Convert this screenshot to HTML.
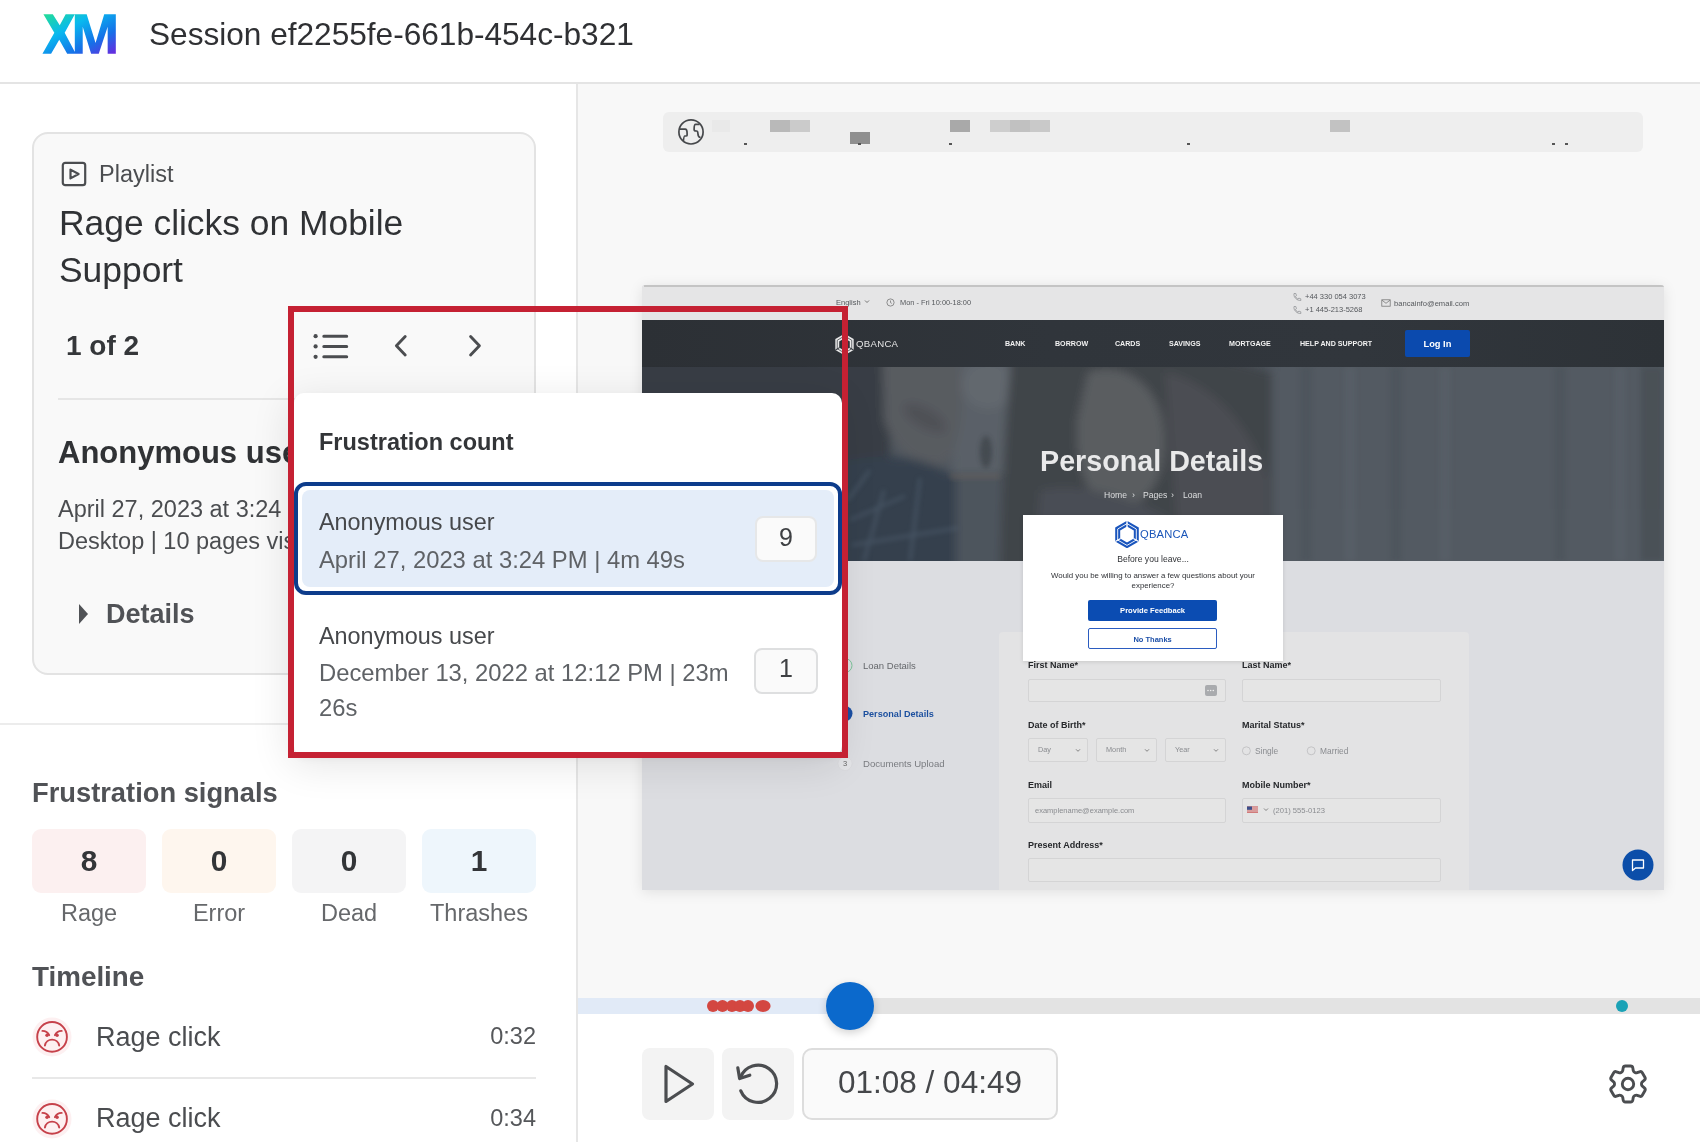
<!DOCTYPE html>
<html><head><meta charset="utf-8">
<style>
*{margin:0;padding:0;box-sizing:border-box}
html,body{width:1700px;height:1142px;overflow:hidden;background:#fff}
body{position:relative;font-family:"Liberation Sans",sans-serif;color:#333}
.a{position:absolute}
.t{position:absolute;white-space:nowrap;line-height:1;will-change:transform}
</style></head><body>

<!-- HEADER -->
<svg class="a" style="left:38px;top:10px" width="84" height="50" viewBox="0 0 1700 1012">
<defs><linearGradient id="xmg" x1="0" y1="0" x2="1" y2="1">
<stop offset="0" stop-color="#25de93"/><stop offset="0.35" stop-color="#09b9ef"/><stop offset="0.7" stop-color="#1670e8"/><stop offset="1" stop-color="#6a28df"/></linearGradient></defs>
<path fill="url(#xmg)" d="M110 85 L300 85 L440 310 L560 85 L745 85 L540 460 L765 885 L590 885 L430 600 L265 885 L90 885 L330 460 Z M745 85 L985 85 L1165 670 L1340 85 L1575 85 L1575 885 L1410 885 L1410 340 L1230 885 L1075 885 L905 340 L905 885 L745 885 Z"/>
</svg>
<div class="t" style="left:149px;top:18.7px;font-size:31.6px;color:#2f3033">Session ef2255fe-661b-454c-b321</div>
<div class="a" style="left:0;top:82px;width:1700px;height:2px;background:#e4e4e4"></div>

<!-- LEFT PANEL -->
<div class="a" style="left:32px;top:132px;width:504px;height:543px;border:2px solid #e3e3e3;border-radius:16px;background:#f9f9f9"></div>
<svg class="a" style="left:61px;top:161px" width="26" height="26" viewBox="0 0 26 26"><rect x="1.8" y="1.8" width="22.4" height="22.4" rx="2.5" fill="none" stroke="#4b4d50" stroke-width="2.2"/><path d="M9.5 8.6 L17.6 13 L9.5 17.4 Z" fill="none" stroke="#4b4d50" stroke-width="2.2" stroke-linejoin="round"/></svg>
<div class="t" style="left:99px;top:162.6px;font-size:23.5px;color:#4b4d50">Playlist</div>
<div class="t" style="left:59px;top:206.2px;font-size:35.4px;color:#303235">Rage clicks on Mobile</div>
<div class="t" style="left:59px;top:253.3px;font-size:35.4px;color:#303235">Support</div>
<div class="t" style="left:66px;top:332px;font-size:28px;font-weight:700;color:#35373a">1 of 2</div>
<div class="a" style="left:58px;top:398px;width:452px;height:2px;background:#e6e6e6"></div>
<div class="t" style="left:58px;top:437.3px;font-size:31px;font-weight:700;color:#303235">Anonymous user</div>
<div class="t" style="left:58px;top:498.1px;font-size:23.5px;color:#4b4d50">April 27, 2023 at 3:24 PM</div>
<div class="t" style="left:58px;top:529.9px;font-size:23.5px;color:#4b4d50">Desktop | 10 pages visited</div>
<svg class="a" style="left:78px;top:603px" width="12" height="22" viewBox="0 0 12 22"><path d="M1 1 L10 11 L1 21 Z" fill="#505256"/></svg>
<div class="t" style="left:106px;top:600.5px;font-size:27px;font-weight:700;color:#505256">Details</div>

<div class="a" style="left:0;top:723px;width:576px;height:2px;background:#ececec"></div>
<div class="t" style="left:32px;top:778.9px;font-size:27.3px;font-weight:700;color:#505256">Frustration signals</div>

<div class="a" style="left:32px;top:829px;width:114px;height:64px;border-radius:9px;background:#fcf0f0"></div>
<div class="a" style="left:162px;top:829px;width:114px;height:64px;border-radius:9px;background:#fef6ee"></div>
<div class="a" style="left:292px;top:829px;width:114px;height:64px;border-radius:9px;background:#f4f4f5"></div>
<div class="a" style="left:422px;top:829px;width:114px;height:64px;border-radius:9px;background:#eef6fc"></div>
<div class="t" style="left:32px;width:114px;text-align:center;top:846px;font-size:29.8px;font-weight:700;color:#333538">8</div>
<div class="t" style="left:162px;width:114px;text-align:center;top:846px;font-size:29.8px;font-weight:700;color:#333538">0</div>
<div class="t" style="left:292px;width:114px;text-align:center;top:846px;font-size:29.8px;font-weight:700;color:#333538">0</div>
<div class="t" style="left:422px;width:114px;text-align:center;top:846px;font-size:29.8px;font-weight:700;color:#333538">1</div>
<div class="t" style="left:32px;width:114px;text-align:center;top:901.5px;font-size:23.5px;color:#66686b">Rage</div>
<div class="t" style="left:162px;width:114px;text-align:center;top:901.5px;font-size:23.5px;color:#66686b">Error</div>
<div class="t" style="left:292px;width:114px;text-align:center;top:901.5px;font-size:23.5px;color:#66686b">Dead</div>
<div class="t" style="left:402px;width:154px;text-align:center;top:901.5px;font-size:23.5px;color:#66686b">Thrashes</div>

<div class="t" style="left:32px;top:962.6px;font-size:27.8px;font-weight:700;color:#505256">Timeline</div>
<svg class="a" style="left:32px;top:1017px" width="40" height="40" viewBox="0 0 40 40"><circle cx="20" cy="20" r="19.5" fill="#fdf0f1"/><circle cx="20.05" cy="19.9" r="14.85" fill="none" stroke="#c6414a" stroke-width="1.9"/><path d="M10.4 13.9 Q15.3 14 17.2 18.2 M29.7 13.9 Q24.8 14 22.9 18.2 M12.9 28.5 A7.3 7.3 0 0 1 27.2 28.5" fill="none" stroke="#c6414a" stroke-width="1.9" stroke-linecap="round"/><circle cx="15" cy="18.2" r="1.7" fill="#c6414a"/><circle cx="25.1" cy="18.2" r="1.7" fill="#c6414a"/></svg>
<div class="t" style="left:95.6px;top:1023.7px;font-size:27px;color:#4b4d50">Rage click</div>
<div class="t" style="left:436px;width:100px;text-align:right;top:1024.8px;font-size:23.5px;color:#55575a">0:32</div>
<div class="a" style="left:32px;top:1077px;width:504px;height:2px;background:#e8e8e8"></div>
<svg class="a" style="left:32px;top:1099px" width="40" height="40" viewBox="0 0 40 40"><circle cx="20" cy="20" r="19.5" fill="#fdf0f1"/><circle cx="20.05" cy="19.9" r="14.85" fill="none" stroke="#c6414a" stroke-width="1.9"/><path d="M10.4 13.9 Q15.3 14 17.2 18.2 M29.7 13.9 Q24.8 14 22.9 18.2 M12.9 28.5 A7.3 7.3 0 0 1 27.2 28.5" fill="none" stroke="#c6414a" stroke-width="1.9" stroke-linecap="round"/><circle cx="15" cy="18.2" r="1.7" fill="#c6414a"/><circle cx="25.1" cy="18.2" r="1.7" fill="#c6414a"/></svg>
<div class="t" style="left:95.6px;top:1105.2px;font-size:27px;color:#4b4d50">Rage click</div>
<div class="t" style="left:436px;width:100px;text-align:right;top:1106.8px;font-size:23.5px;color:#55575a">0:34</div>

<div class="a" style="left:576px;top:84px;width:2px;height:1058px;background:#e6e6e6"></div>


<!-- RIGHT PANEL -->
<div class="a" style="left:578px;top:84px;width:1122px;height:914px;background:#f8f8f8"></div>
<div class="a" style="left:578px;top:1014px;width:1122px;height:128px;background:#fff"></div>
<!-- url bar -->
<div class="a" style="left:663px;top:112px;width:980px;height:40px;border-radius:6px;background:#eeeeee"></div>
<svg class="a" style="left:677px;top:118px" width="28" height="28" viewBox="0 0 28 28"><circle cx="14" cy="13.9" r="12.1" fill="none" stroke="#46484b" stroke-width="1.7"/><path d="M2.3 11.1 H8.2 C9.4 11.1 10.1 12.6 10.1 15 V17.2 C10.1 17.8 9.6 18 8.8 18 H7.8 C7 18 6.8 19 6.4 22.9 M22.6 6.4 H18.6 C17.6 6.4 17.1 8.5 17.1 11.5 C17.1 12.5 17.8 13 19 13 H19.6 C20.5 13 20.8 13.8 20.9 15.5 C21 18.5 21.6 19.3 23.6 19.5" fill="none" stroke="#46484b" stroke-width="1.7" stroke-linejoin="round"/></svg>
<div class="a" style="left:712px;top:120px;width:18px;height:12px;background:#e9e9e9"></div>
<div class="a" style="left:770px;top:120px;width:20px;height:12px;background:#b9b9b9"></div>
<div class="a" style="left:790px;top:120px;width:20px;height:12px;background:#cbcbcb"></div>
<div class="a" style="left:850px;top:132px;width:20px;height:12px;background:#8f8f8f"></div>
<div class="a" style="left:950px;top:120px;width:20px;height:12px;background:#a9a9a9"></div>
<div class="a" style="left:990px;top:120px;width:20px;height:12px;background:#cecece"></div>
<div class="a" style="left:1010px;top:120px;width:20px;height:12px;background:#c1c1c1"></div>
<div class="a" style="left:1030px;top:120px;width:20px;height:12px;background:#c9c9c9"></div>
<div class="a" style="left:1330px;top:120px;width:20px;height:12px;background:#c2c2c2"></div><div class="a" style="left:744px;top:143px;width:3px;height:1.5px;background:#555"></div><div class="a" style="left:858px;top:143px;width:3px;height:1.5px;background:#555"></div><div class="a" style="left:949px;top:143px;width:3px;height:1.5px;background:#555"></div><div class="a" style="left:1187px;top:143px;width:3px;height:1.5px;background:#555"></div><div class="a" style="left:1552px;top:143px;width:3px;height:1.5px;background:#555"></div><div class="a" style="left:1565px;top:143px;width:3px;height:1.5px;background:#555"></div>

<!-- website -->
<div class="a" id="site" style="left:642px;top:285px;width:1022px;height:605px;overflow:hidden;background:#dcdde1;border-radius:3px 3px 0 0;box-shadow:0 2px 14px rgba(0,0,0,0.10)">
  <div class="a" style="left:0;top:0;width:1022px;height:35px;background:#e5e5e6"></div><div class="a" style="left:2px;top:0;width:1020px;height:1.5px;background:#c4c4c4"></div>
  <div class="a" style="left:0;top:35px;width:1022px;height:47px;background:linear-gradient(90deg,#2c3035 0%,#30353b 40%,#31363c 70%,#2d3237 100%)"></div>
  <div class="a" id="hero" style="left:0;top:82px;width:1022px;height:194px;background:#4f565f;overflow:hidden"><svg class="a" style="left:0;top:0" width="1022" height="194" viewBox="642 367 1022 194"><defs><filter id="bl" x="-20%" y="-20%" width="140%" height="140%"><feGaussianBlur stdDeviation="5"/></filter><filter id="bl2" x="-20%" y="-20%" width="140%" height="140%"><feGaussianBlur stdDeviation="2.5"/></filter></defs>
<rect x="600" y="340" width="1100" height="260" fill="#4f565e"/>
<g filter="url(#bl)">
<rect x="600" y="340" width="290" height="130" fill="#383d44"/>
<rect x="600" y="465" width="290" height="140" fill="#3c4651"/>
<rect x="952" y="345" width="70" height="132" fill="#5a6168"/>
<rect x="948" y="474" width="72" height="130" fill="#4e555d"/>
<ellipse cx="988" cy="385" rx="26" ry="24" fill="#62686e"/>
<path d="M882 352 L958 352 C966 400 962 440 946 464 C916 468 894 452 884 420 Z" fill="#585b61"/>
<ellipse cx="925" cy="418" rx="24" ry="10" fill="#505156" transform="rotate(30 925 418)"/>
<path d="M842 462 C880 452 925 455 956 478 L956 600 L842 600 Z" fill="#36414d"/>
<path d="M1012 350 C1070 345 1200 345 1272 372 L1272 600 L1000 600 C1000 520 1004 430 1012 350 Z" fill="#41444a"/>
<path d="M1165 372 C1205 380 1250 420 1268 480 L1268 565 L1180 565 C1175 500 1170 440 1165 372 Z" fill="#4b4e53"/>
<path d="M1088 372 C1118 362 1152 378 1162 418 C1172 468 1152 508 1116 508 C1086 503 1074 462 1077 420 Z" fill="#5a5d61"/>
<path d="M1040 490 C1080 480 1150 500 1185 530 L1185 600 L1030 600 Z" fill="#4a4e54"/>
<rect x="1272" y="340" width="450" height="260" fill="#535a62"/>
</g>
<g filter="url(#bl2)" opacity="0.45">
<ellipse cx="986" cy="452" rx="6" ry="16" fill="#2c3136"/>
<rect x="950" y="474" width="50" height="5" fill="#6a6058"/>
<path d="M850 520 L905 496 M864 561 L884 490 M910 561 L920 478 M852 545 L958 528 M870 470 L848 500" stroke="#5a6b7d" stroke-width="3" fill="none"/>
<path d="M1306 367 V561 M1396 367 V561 M1560 367 V561" stroke="#4a5158" stroke-width="12"/>
<path d="M1350 367 V561 M1445 367 V561 M1620 367 V561" stroke="#5b636c" stroke-width="12"/>
<path d="M1652 367 V561" stroke="#40464c" stroke-width="22"/>
</g>
</svg></div>
<div class="t" style="left:194.3px;top:13.8px;font-size:7.5px;font-weight:400;color:#55585c;">English</div>
<svg class="a" style="left:222px;top:14px" width="6" height="5" viewBox="0 0 6 5"><path d="M1 1.5 L3 3.5 L5 1.5" fill="none" stroke="#666" stroke-width="0.9"/></svg>
<svg class="a" style="left:244px;top:12.5px" width="9" height="9" viewBox="0 0 9 9"><circle cx="4.5" cy="4.5" r="3.6" fill="none" stroke="#777" stroke-width="0.8"/><path d="M4.5 2.5 V4.6 L5.8 5.4" fill="none" stroke="#777" stroke-width="0.8"/></svg>
<div class="t" style="left:258.2px;top:13.8px;font-size:7.4px;font-weight:400;color:#55585c;">Mon - Fri 10:00-18:00</div>
<svg class="a" style="left:650px;top:6.699999999999989px" width="10" height="10" viewBox="0 0 10 10"><path d="M2 1.5 L3.8 1.5 L4.5 3.6 L3.4 4.4 C4 5.8 4.8 6.6 6 7.2 L6.8 6.1 L8.8 6.8 L8.8 8.5 C5 8.8 1.3 5.2 2 1.5 Z" fill="none" stroke="#8a8c8f" stroke-width="0.7"/></svg>
<svg class="a" style="left:650px;top:19.600000000000023px" width="10" height="10" viewBox="0 0 10 10"><path d="M2 1.5 L3.8 1.5 L4.5 3.6 L3.4 4.4 C4 5.8 4.8 6.6 6 7.2 L6.8 6.1 L8.8 6.8 L8.8 8.5 C5 8.8 1.3 5.2 2 1.5 Z" fill="none" stroke="#8a8c8f" stroke-width="0.7"/></svg>
<div class="t" style="left:662.7px;top:7.9px;font-size:7.5px;font-weight:400;color:#55585c;">+44 330 054 3073</div>
<div class="t" style="left:662.7px;top:20.9px;font-size:7.5px;font-weight:400;color:#55585c;">+1 445-213-5268</div>
<svg class="a" style="left:739px;top:14px" width="10" height="8" viewBox="0 0 10 8"><rect x="0.8" y="0.8" width="8.4" height="6.4" fill="none" stroke="#777" stroke-width="0.8"/><path d="M1 1.2 L5 4.3 L9 1.2" fill="none" stroke="#777" stroke-width="0.8"/></svg>
<div class="t" style="left:751.7px;top:15.0px;font-size:7.6px;font-weight:400;color:#55585c;">bancainfo@email.com</div>
<svg class="a" style="left:193px;top:48.5px" width="19" height="21" viewBox="0 0 24 27"><path d="M12 2.6 L21.3 8 L21.3 19 L12 24.4 L2.7 19 L2.7 8 Z" fill="none" stroke="#e8e8e8" stroke-width="5" stroke-linejoin="miter"/><path d="M12 2.6 L21.3 8 L21.3 19 L12 24.4 L2.7 19 L2.7 8 Z" fill="none" stroke="#30353b" stroke-width="0.9"/><path d="M12 0 L12 6 M0.4 20.5 L5.6 17.5 M23.6 20.5 L18.4 17.5" stroke="#30353b" stroke-width="1.3"/></svg>
<div class="t" style="left:214.0px;top:54.0px;font-size:9.6px;font-weight:400;color:#e6e6e6;letter-spacing:0.3px">QBANCA</div>
<div class="t" style="left:363.2px;top:55.5px;font-size:7.1px;font-weight:700;color:#f2f2f2;">BANK</div>
<div class="t" style="left:412.8px;top:55.5px;font-size:7.1px;font-weight:700;color:#f2f2f2;">BORROW</div>
<div class="t" style="left:473.3px;top:55.5px;font-size:7.1px;font-weight:700;color:#f2f2f2;">CARDS</div>
<div class="t" style="left:526.6px;top:55.5px;font-size:7.1px;font-weight:700;color:#f2f2f2;">SAVINGS</div>
<div class="t" style="left:587.1px;top:55.5px;font-size:7.1px;font-weight:700;color:#f2f2f2;">MORTGAGE</div>
<div class="t" style="left:657.5px;top:55.5px;font-size:7.1px;font-weight:700;color:#f2f2f2;">HELP AND SUPPORT</div>
<div class="a" style="left:762.7px;top:45.0px;width:64.9px;height:27.0px;background:#0b4aae;border-radius:2px"></div>
<div class="t" style="left:762.7px;width:64.9px;text-align:center;top:54.9px;font-size:9.3px;font-weight:700;color:#ffffff;">Log In</div>
<div class="t" style="left:398px;top:162.4px;font-size:28.7px;font-weight:700;color:#e9e9ea">Personal Details</div>
<div class="t" style="left:461.6px;top:206.2px;font-size:8.6px;font-weight:400;color:#dedfe0;">Home</div>
<div class="t" style="left:490.0px;top:206.0px;font-size:9px;font-weight:400;color:#dedfe0;">&#8250;</div>
<div class="t" style="left:501.0px;top:206.2px;font-size:8.6px;font-weight:400;color:#dedfe0;">Pages</div>
<div class="t" style="left:529.0px;top:206.0px;font-size:9px;font-weight:400;color:#dedfe0;">&#8250;</div>
<div class="t" style="left:541.0px;top:206.2px;font-size:8.6px;font-weight:400;color:#dedfe0;">Loan</div>
<svg class="a" style="left:193px;top:370px" width="20" height="120" viewBox="0 0 20 120"><circle cx="10" cy="10.5" r="7" fill="none" stroke="#7cc49a" stroke-width="1"/><circle cx="10" cy="58.6" r="7.5" fill="#1a4fa3"/><circle cx="10" cy="108.5" r="7" fill="#e3e4e7" stroke="#d6d7da" stroke-width="0.6"/></svg>
<div class="t" style="left:198.0px;width:10.0px;text-align:center;top:475.2px;font-size:7.5px;font-weight:400;color:#666;">3</div>
<div class="t" style="left:221.4px;top:376.4px;font-size:9.5px;font-weight:400;color:#66686c;">Loan Details</div>
<div class="t" style="left:221.4px;top:424.6px;font-size:9.1px;font-weight:700;color:#1b4f9f;">Personal Details</div>
<div class="t" style="left:221.4px;top:474.2px;font-size:9.6px;font-weight:400;color:#7a7c80;">Documents Upload</div>
<div class="a" style="left:357.0px;top:347.0px;width:470.0px;height:268.0px;background:#e3e3e4;border-radius:4px"></div>
<div class="t" style="left:385.5px;top:376.0px;font-size:9px;font-weight:700;color:#26282b;">First Name*</div>
<div class="t" style="left:600.4px;top:376.0px;font-size:9px;font-weight:700;color:#26282b;">Last Name*</div>
<div class="t" style="left:385.5px;top:436.0px;font-size:9px;font-weight:700;color:#26282b;">Date of Birth*</div>
<div class="t" style="left:600.4px;top:436.0px;font-size:9px;font-weight:700;color:#26282b;">Marital Status*</div>
<div class="t" style="left:385.5px;top:496.0px;font-size:9px;font-weight:700;color:#26282b;">Email</div>
<div class="t" style="left:600.4px;top:496.0px;font-size:9px;font-weight:700;color:#26282b;">Mobile Number*</div>
<div class="t" style="left:385.5px;top:556.0px;font-size:9px;font-weight:700;color:#26282b;">Present Address*</div>
<div class="a" style="left:385.5px;top:393.6px;width:198.2px;height:23.0px;background:#e5e5e5;border:1px solid #d4d4d5;border-radius:2px"></div>
<div class="a" style="left:563.3px;top:399.5px;width:11.3px;height:11.0px;background:#a9abae;border-radius:2px"></div><svg class="a" style="left:563.3px;top:399.5px" width="11.3" height="11" viewBox="0 0 11.3 11"><circle cx="3" cy="5.5" r="0.8" fill="#eee"/><circle cx="5.65" cy="5.5" r="0.8" fill="#eee"/><circle cx="8.3" cy="5.5" r="0.8" fill="#eee"/></svg>
<div class="a" style="left:600.4px;top:393.6px;width:198.5px;height:23.0px;background:#e5e5e5;border:1px solid #d4d4d5;border-radius:2px"></div>
<div class="a" style="left:385.5px;top:453.1px;width:60.5px;height:23.9px;background:#e5e5e5;border:1px solid #d4d4d5;border-radius:2px"></div>
<div class="t" style="left:395.5px;top:461.4px;font-size:7.3px;font-weight:400;color:#8a8c90;">Day</div>
<svg class="a" style="left:433.0px;top:463.0px" width="6" height="5" viewBox="0 0 6 5"><path d="M1 1.3 L3 3.3 L5 1.3" fill="none" stroke="#777" stroke-width="0.9"/></svg>
<div class="a" style="left:454.3px;top:453.1px;width:60.6px;height:23.9px;background:#e5e5e5;border:1px solid #d4d4d5;border-radius:2px"></div>
<div class="t" style="left:464.3px;top:461.4px;font-size:7.3px;font-weight:400;color:#8a8c90;">Month</div>
<svg class="a" style="left:501.9px;top:463.0px" width="6" height="5" viewBox="0 0 6 5"><path d="M1 1.3 L3 3.3 L5 1.3" fill="none" stroke="#777" stroke-width="0.9"/></svg>
<div class="a" style="left:523.4px;top:453.1px;width:60.3px;height:23.9px;background:#e5e5e5;border:1px solid #d4d4d5;border-radius:2px"></div>
<div class="t" style="left:533.4px;top:461.4px;font-size:7.3px;font-weight:400;color:#8a8c90;">Year</div>
<svg class="a" style="left:570.7px;top:463.0px" width="6" height="5" viewBox="0 0 6 5"><path d="M1 1.3 L3 3.3 L5 1.3" fill="none" stroke="#777" stroke-width="0.9"/></svg>
<svg class="a" style="left:598px;top:460px" width="80" height="12" viewBox="0 0 80 12"><circle cx="6.4" cy="5.8" r="4" fill="none" stroke="#bfc0c2" stroke-width="0.9"/><circle cx="71.2" cy="5.8" r="4" fill="none" stroke="#bfc0c2" stroke-width="0.9"/></svg>
<div class="t" style="left:613.4px;top:462.3px;font-size:8.4px;font-weight:400;color:#8a8c90;">Single</div>
<div class="t" style="left:678.0px;top:462.3px;font-size:8.4px;font-weight:400;color:#8a8c90;">Married</div>
<div class="a" style="left:385.5px;top:513.2px;width:198.2px;height:24.4px;background:#e5e5e5;border:1px solid #d4d4d5;border-radius:2px"></div>
<div class="t" style="left:392.6px;top:522.0px;font-size:7.5px;font-weight:400;color:#8a8c90;">examplename@example.com</div>
<div class="a" style="left:600.4px;top:513.2px;width:198.5px;height:24.4px;background:#e5e5e5;border:1px solid #d4d4d5;border-radius:2px"></div>
<svg class="a" style="left:604.5px;top:521px" width="24" height="8" viewBox="0 0 24 8"><rect x="0" y="0.5" width="11" height="6.5" fill="#c54a4a"/><rect x="0" y="1.5" width="11" height="1" fill="#eee"/><rect x="0" y="3.5" width="11" height="1" fill="#eee"/><rect x="0" y="5.5" width="11" height="0.8" fill="#eee"/><rect x="0" y="0.5" width="5" height="3.3" fill="#3d4f8a"/><path d="M17 2.5 L19 4.5 L21 2.5" fill="none" stroke="#777" stroke-width="0.9"/></svg>
<div class="t" style="left:631.4px;top:522.0px;font-size:7.6px;font-weight:400;color:#8a8c90;">(201) 555-0123</div>
<div class="a" style="left:385.5px;top:573.3px;width:413.4px;height:24.1px;background:#e5e5e5;border:1px solid #d4d4d5;border-radius:2px"></div>
<svg class="a" style="left:980px;top:563.5px" width="32" height="32" viewBox="0 0 32 32"><circle cx="16" cy="16" r="15.5" fill="#0c4ea9"/><path d="M10.5 11 H21.5 V19 H13.5 L10.5 21.5 Z" fill="none" stroke="#fff" stroke-width="1.3" stroke-linejoin="round"/></svg>
<div class="a" style="left:381.0px;top:230.0px;width:260.0px;height:145.5px;background:#fff;box-shadow:0 1px 4px rgba(0,0,0,0.12)"></div>
<svg class="a" style="left:473px;top:235.5px" width="24" height="27" viewBox="0 0 24 27"><path d="M12 2.6 L21.3 8 L21.3 19 L12 24.4 L2.7 19 L2.7 8 Z" fill="none" stroke="#1a55bd" stroke-width="5" stroke-linejoin="miter"/><path d="M12 2.6 L21.3 8 L21.3 19 L12 24.4 L2.7 19 L2.7 8 Z" fill="none" stroke="#ffffff" stroke-width="0.9"/><path d="M12 0 L12 6 M0.4 20.5 L5.6 17.5 M23.6 20.5 L18.4 17.5" stroke="#ffffff" stroke-width="1.3"/></svg>
<div class="t" style="left:497.5px;top:243.9px;font-size:11.2px;font-weight:400;color:#1b56b9;letter-spacing:0.2px">QBANCA</div>
<div class="t" style="left:381.0px;width:260.0px;text-align:center;top:270.4px;font-size:8.6px;font-weight:400;color:#303236;">Before you leave...</div>
<div class="t" style="left:381.0px;width:260.0px;text-align:center;top:287.0px;font-size:7.86px;font-weight:400;color:#303236;">Would you be willing to answer a few questions about your</div>
<div class="t" style="left:381.0px;width:260.0px;text-align:center;top:297.0px;font-size:7.86px;font-weight:400;color:#303236;">experience?</div>
<div class="a" style="left:446.3px;top:314.7px;width:129.2px;height:21.5px;background:#0b4cb2;border-radius:2px"></div>
<div class="t" style="left:446.3px;width:129.2px;text-align:center;top:322.2px;font-size:7.6px;font-weight:700;color:#ffffff;">Provide Feedback</div>
<div class="a" style="left:446.3px;top:342.9px;width:129.2px;height:21.6px;background:#fff;border:1.3px solid #2b5cc0;border-radius:2px"></div>
<div class="t" style="left:446.3px;width:129.2px;text-align:center;top:350.5px;font-size:7.5px;font-weight:700;color:#1c4fa8;">No Thanks</div>
</div>

<!-- progress -->
<div class="a" style="left:578px;top:998px;width:272px;height:16px;background:#e1eaf7"></div>
<div class="a" style="left:850px;top:998px;width:850px;height:16px;background:#e3e3e3"></div>
<svg class="a" style="left:700px;top:996px" width="80" height="20" viewBox="700 996 80 20"><circle cx="713" cy="1005.9" r="6" fill="#d34741"/><circle cx="722.5" cy="1005.9" r="6" fill="#d34741"/><circle cx="732" cy="1005.9" r="6" fill="#d34741"/><circle cx="740" cy="1005.9" r="6" fill="#d34741"/><circle cx="748" cy="1005.9" r="6" fill="#d34741"/><ellipse cx="763" cy="1005.9" rx="7.6" ry="6" fill="#d34741"/></svg>
<div class="a" style="left:1616px;top:1000px;width:12px;height:12px;border-radius:6px;background:#1ba2b6"></div>
<div class="a" style="left:826px;top:982px;width:48px;height:48px;border-radius:24px;background:#0b69cc;box-shadow:0 3px 8px rgba(0,0,0,0.18)"></div>

<!-- controls -->
<div class="a" style="left:642px;top:1048px;width:72px;height:72px;border-radius:8px;background:#f3f3f3"></div>
<svg class="a" style="left:642px;top:1048px" width="72" height="72" viewBox="0 0 72 72"><path d="M24 18.5 L24 53.5 L50.5 36 Z" fill="none" stroke="#4b4d50" stroke-width="3.2" stroke-linejoin="round"/></svg>
<div class="a" style="left:722px;top:1048px;width:72px;height:72px;border-radius:8px;background:#f3f3f3"></div>
<svg class="a" style="left:722px;top:1048px" width="72" height="72" viewBox="0 0 72 72"><path d="M18.5 29.5 A18.6 18.6 0 1 1 18.8 42.8" fill="none" stroke="#4b4d50" stroke-width="3.2" stroke-linecap="round"/><path d="M15.8 19.8 L17.6 30.6 L27.8 27.2" fill="none" stroke="#4b4d50" stroke-width="3.2" stroke-linecap="round" stroke-linejoin="round"/></svg>
<div class="a" style="left:802px;top:1048px;width:256px;height:72px;border-radius:10px;background:#fafafa;border:2px solid #dddddd"></div>
<div class="t" style="left:802px;width:256px;text-align:center;top:1067.4px;font-size:31.5px;color:#45474a">01:08 / 04:49</div>
<svg class="a" style="left:1604px;top:1059.5px" width="48" height="48" viewBox="0 0 24 24"><path fill="none" stroke="#4b4d50" stroke-width="1.45" stroke-linejoin="round" d="M9.594 3.94c.09-.542.56-.94 1.11-.94h2.593c.55 0 1.02.398 1.11.94l.213 1.281c.063.374.313.686.645.87.074.04.147.083.22.127.325.196.72.257 1.075.124l1.217-.456a1.125 1.125 0 0 1 1.37.49l1.296 2.247a1.125 1.125 0 0 1-.26 1.431l-1.003.827c-.293.241-.438.613-.43.992a7.723 7.723 0 0 1 0 .255c-.008.378.137.75.43.991l1.004.827c.424.35.534.955.26 1.43l-1.298 2.247a1.125 1.125 0 0 1-1.369.491l-1.217-.456c-.355-.133-.75-.072-1.076.124a6.47 6.47 0 0 1-.22.128c-.331.183-.581.495-.644.869l-.213 1.281c-.09.543-.56.94-1.11.94h-2.594c-.55 0-1.019-.398-1.11-.94l-.213-1.281c-.062-.374-.312-.686-.644-.87a6.52 6.52 0 0 1-.22-.127c-.325-.196-.72-.257-1.076-.124l-1.217.456a1.125 1.125 0 0 1-1.369-.49l-1.297-2.247a1.125 1.125 0 0 1 .26-1.431l1.004-.827c.292-.24.437-.613.43-.991a6.932 6.932 0 0 1 0-.255c.007-.38-.138-.751-.43-.992l-1.004-.827a1.125 1.125 0 0 1-.26-1.43l1.297-2.247a1.125 1.125 0 0 1 1.37-.491l1.216.456c.356.133.751.072 1.076-.124.072-.044.146-.086.22-.128.332-.183.582-.495.644-.869l.214-1.28Z"/><circle cx="12" cy="12" r="2.85" fill="none" stroke="#4b4d50" stroke-width="1.45"/></svg>


<!-- NAV ICONS (under red box) -->
<svg class="a" style="left:300px;top:325px" width="60" height="44" viewBox="300 325 60 44"><circle cx="315.6" cy="336.2" r="2.1" fill="#4b4d50"/><circle cx="315.6" cy="346.4" r="2.1" fill="#4b4d50"/><circle cx="315.6" cy="356.8" r="2.1" fill="#4b4d50"/><path d="M323.8 336.2 H346.7 M323.8 346.4 H346.7 M323.8 356.8 H346.7" stroke="#4b4d50" stroke-width="3" stroke-linecap="round"/></svg>
<svg class="a" style="left:385px;top:325px" width="110" height="44" viewBox="385 325 110 44"><path d="M405.2 336.6 L396.4 345.8 L405.2 355" fill="none" stroke="#4b4d50" stroke-width="2.9" stroke-linecap="round" stroke-linejoin="round"/><path d="M470.6 336.6 L479.4 345.8 L470.6 355" fill="none" stroke="#4b4d50" stroke-width="2.9" stroke-linecap="round" stroke-linejoin="round"/></svg>

<!-- DROPDOWN -->
<div class="a" style="left:294px;top:393px;width:548px;height:363px;border-radius:10px;background:#fff;box-shadow:-4px 8px 40px rgba(0,0,0,0.11),0 3px 10px rgba(0,0,0,0.05)"></div>
<div class="t" style="left:318.5px;top:430.8px;font-size:23.5px;font-weight:700;color:#333538">Frustration count</div>
<div class="a" style="left:294px;top:482px;width:548px;height:113px;border-radius:12px;border:4px solid #0d3c8b;background:#fff"></div>
<div class="a" style="left:302px;top:490px;width:532px;height:97px;border-radius:8px;background:#e4edf9"></div>
<div class="t" style="left:318.5px;top:511.2px;font-size:23.4px;color:#46484b">Anonymous user</div>
<div class="t" style="left:318.5px;top:547.5px;font-size:23.8px;color:#5f6266">April 27, 2023 at 3:24 PM | 4m 49s</div>
<div class="a" style="left:755px;top:516px;width:62px;height:46px;border-radius:8px;border:2px solid #e6e7e8;background:#fafafa"></div>
<div class="t" style="left:755px;width:62px;text-align:center;top:525px;font-size:25px;color:#3e4043">9</div>
<div class="t" style="left:318.5px;top:625px;font-size:23.4px;color:#46484b">Anonymous user</div>
<div class="t" style="left:318.5px;top:661.4px;font-size:23.8px;color:#5f6266">December 13, 2022 at 12:12 PM | 23m</div>
<div class="t" style="left:318.5px;top:695.8px;font-size:23.8px;color:#5f6266">26s</div>
<div class="a" style="left:754px;top:648px;width:64px;height:46px;border-radius:8px;border:2px solid #dedfe0;background:#fafafa"></div>
<div class="t" style="left:754px;width:64px;text-align:center;top:656px;font-size:25px;color:#3e4043">1</div>

<!-- RED BOX -->
<div class="a" style="left:288px;top:306px;width:560px;height:452px;border:6px solid #c52133"></div>

</body></html>
